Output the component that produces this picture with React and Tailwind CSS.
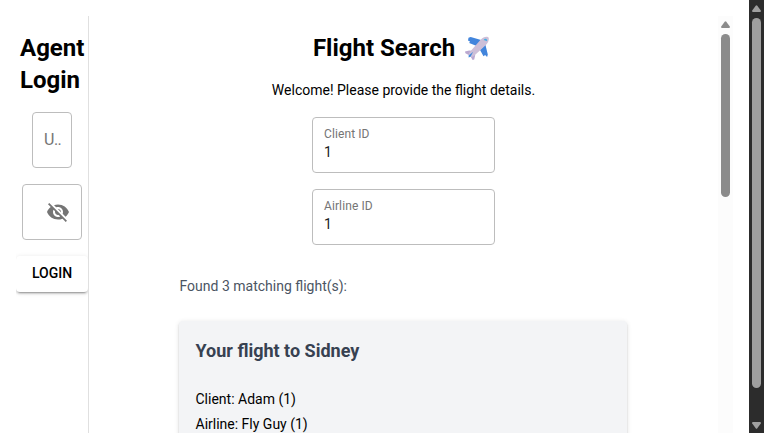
import React from 'react';

function Plane() {
  return (
    <svg className="h-6 w-6 shrink-0" viewBox="0 0 24 24" aria-hidden="true">
      <path d="M3.5 1.8l2.2-.8 10.4 3-4.4 6L4.2 7 5 5.6 3 4.6z" fill="#4285dc" />
      <path d="M20.3 8.2l2.5 10.3-.7 2.4-2-2-1.6 1.4-3.6-6.6z" fill="#4285dc" />
      <path d="M8.5 15l-4.3-.5-4.2 1 .4 1.7 4.8 2.6 2.4 4.1 1.6-.4 1-4.2z" fill="#baa8d0" />
      <path d="M4.6 16.2L15.6 3.7C17.6 1.6 20 .4 22 .7c1.6.2 2 1.2 1.8 2.8-.3 2.3-1.5 4.3-3.7 6.2L8.6 20.2c-1.5 1-3.5 1.1-4.3.3-.8-.9-.8-2.6.3-4.3z" fill="#cdbfd8" />
      <path d="M3.6 19.6l4.6-3.8-2.7 5-1.9.7z" fill="#438bdd" />
      <path d="M18.9 3.4c1.5-1 2.5-.6 3.4.8l-1 1c-.8-.9-1.5-1.3-2.4-.8z" fill="#3faee5" />
    </svg>
  );
}

function Scrollbar({ track, arrow, thumb, bottom }) {
  return (
    <div className={`flex h-full w-[15px] shrink-0 flex-col items-center ${track}`}>
      <svg className={`mt-[5px] h-[7px] w-[9px] shrink-0 ${arrow}`} viewBox="0 0 9 7" fill="currentColor">
        <path d="M3.7.7Q4.5-.4 5.3.7L8.8 5.6Q9.2 7 8 7H1Q-.2 7 .2 5.6z" />
      </svg>
      <div className={`w-[9px] shrink-0 rounded-full ${thumb}`} />
      {bottom && (
        <svg className={`mt-auto mb-[4px] h-[7px] w-[9px] shrink-0 ${arrow}`} viewBox="0 0 9 7" fill="currentColor">
          <path d="M3.7 6.3Q4.5 7.4 5.3 6.3L8.8 1.4Q9.2 0 8 0H1Q-.2 0 .2 1.4z" />
        </svg>
      )}
    </div>
  );
}

function Field({ label, value }) {
  return (
    <div className="flex h-14 w-[183px] flex-col rounded border border-[#bdbdbd] px-[11px] pt-[8px]">
      <span className="text-[12px] leading-4 tracking-[0.1px] text-[#757575]">{label}</span>
      <span className="text-sm leading-5 text-[#212121]">{value}</span>
    </div>
  );
}

function Sidebar() {
  return (
    <aside className="flex w-[73px] shrink-0 flex-col items-center overflow-hidden border-r border-[#e0e0e0]">
      <h1 className="mt-4 w-full pl-1 text-2xl leading-8 font-bold">Agent Login</h1>
      <div className="mt-4 flex h-14 w-10 items-center rounded border border-[#bdbdbd] pl-[11px] text-base tracking-[-0.5px] text-[#757575]">U..</div>
      <div className="mt-4 flex h-14 w-[60px] items-center justify-end rounded border border-[#bdbdbd] pr-[11px]">
        <svg className="h-6 w-6" viewBox="0 0 24 24" fill="#757575">
          <path d="M12 7c2.76 0 5 2.24 5 5 0 .65-.13 1.26-.36 1.83l2.92 2.92c1.51-1.26 2.7-2.89 3.43-4.75-1.73-4.39-6-7.5-11-7.5-1.4 0-2.74.25-3.98.7l2.16 2.16C10.74 7.13 11.35 7 12 7zM2 4.27l2.28 2.28.46.46C3.08 8.3 1.78 10.02 1 12c1.73 4.39 6 7.5 11 7.5 1.55 0 3.03-.3 4.38-.84l.42.42L19.73 22 21 20.73 3.27 3 2 4.27zM7.53 9.8l1.55 1.55c-.05.21-.08.43-.08.65 0 1.66 1.34 3 3 3 .22 0 .44-.03.65-.08l1.55 1.55c-.67.33-1.41.53-2.2.53-2.76 0-5-2.24-5-5 0-.79.2-1.53.53-2.2zm4.31-.78l3.15 3.15.02-.16c0-1.66-1.34-3-3-3l-.17.01z" />
        </svg>
      </div>
      <button className="mt-4 h-9 w-[72px] shrink-0 rounded bg-white pb-[2px] text-sm font-medium shadow-[0_3px_1px_-2px_rgba(0,0,0,0.2),0_2px_2px_0_rgba(0,0,0,0.14),0_1px_5px_0_rgba(0,0,0,0.12)]">LOGIN</button>
    </aside>
  );
}

export default function App() {
  return (
    <div className="flex h-[433px] w-[764px] overflow-hidden bg-white font-[Roboto,sans-serif] text-black">
      <div className="flex flex-1 pt-4 pr-4 pl-4">
        <Sidebar />
        <main className="flex min-w-0 flex-1 flex-col items-center overflow-hidden">
          <div className="mt-4 flex items-center gap-[10px] pr-[5px]">
            <h1 className="text-2xl leading-8 font-bold">Flight Search</h1>
            <Plane />
          </div>
          <p className="mt-4 text-sm leading-5">Welcome! Please provide the flight details.</p>
          <div className="mt-[17px] flex flex-col gap-4">
            <Field label="Client ID" value="1" />
            <Field label="Airline ID" value="1" />
          </div>
          <section className="w-[449px]">
            <p className="mt-[31px] pl-[0.5px] text-sm leading-5 text-[#4b5563]">Found 3 matching flight(s):</p>
            <article className="mt-[25px] h-[220px] w-[448px] rounded bg-[#f3f4f6] pr-4 pl-[16.5px] pt-4 shadow-[0_3px_1px_-2px_rgba(0,0,0,0.2),0_2px_2px_0_rgba(0,0,0,0.14),0_1px_5px_0_rgba(0,0,0,0.12)]">
              <h2 className="text-lg leading-7 font-bold text-[#374151]">Your flight to Sidney</h2>
              <p className="mt-[22px] text-sm leading-[25px]">Client: Adam (1)</p>
              <p className="text-sm leading-[25px]">Airline: Fly Guy (1)</p>
            </article>
          </section>
        </main>
        <Scrollbar track="bg-[#fcfcfc]" arrow="text-[#8b8b8b]" thumb="mt-[6px] h-[163px] bg-[#8b8b8b]" />
      </div>
      <Scrollbar track="bg-[#2c2c2c]" arrow="text-[#9f9f9f]" thumb="mt-[6px] h-[370px] bg-[#9f9f9f]" bottom />
    </div>
  );
}
